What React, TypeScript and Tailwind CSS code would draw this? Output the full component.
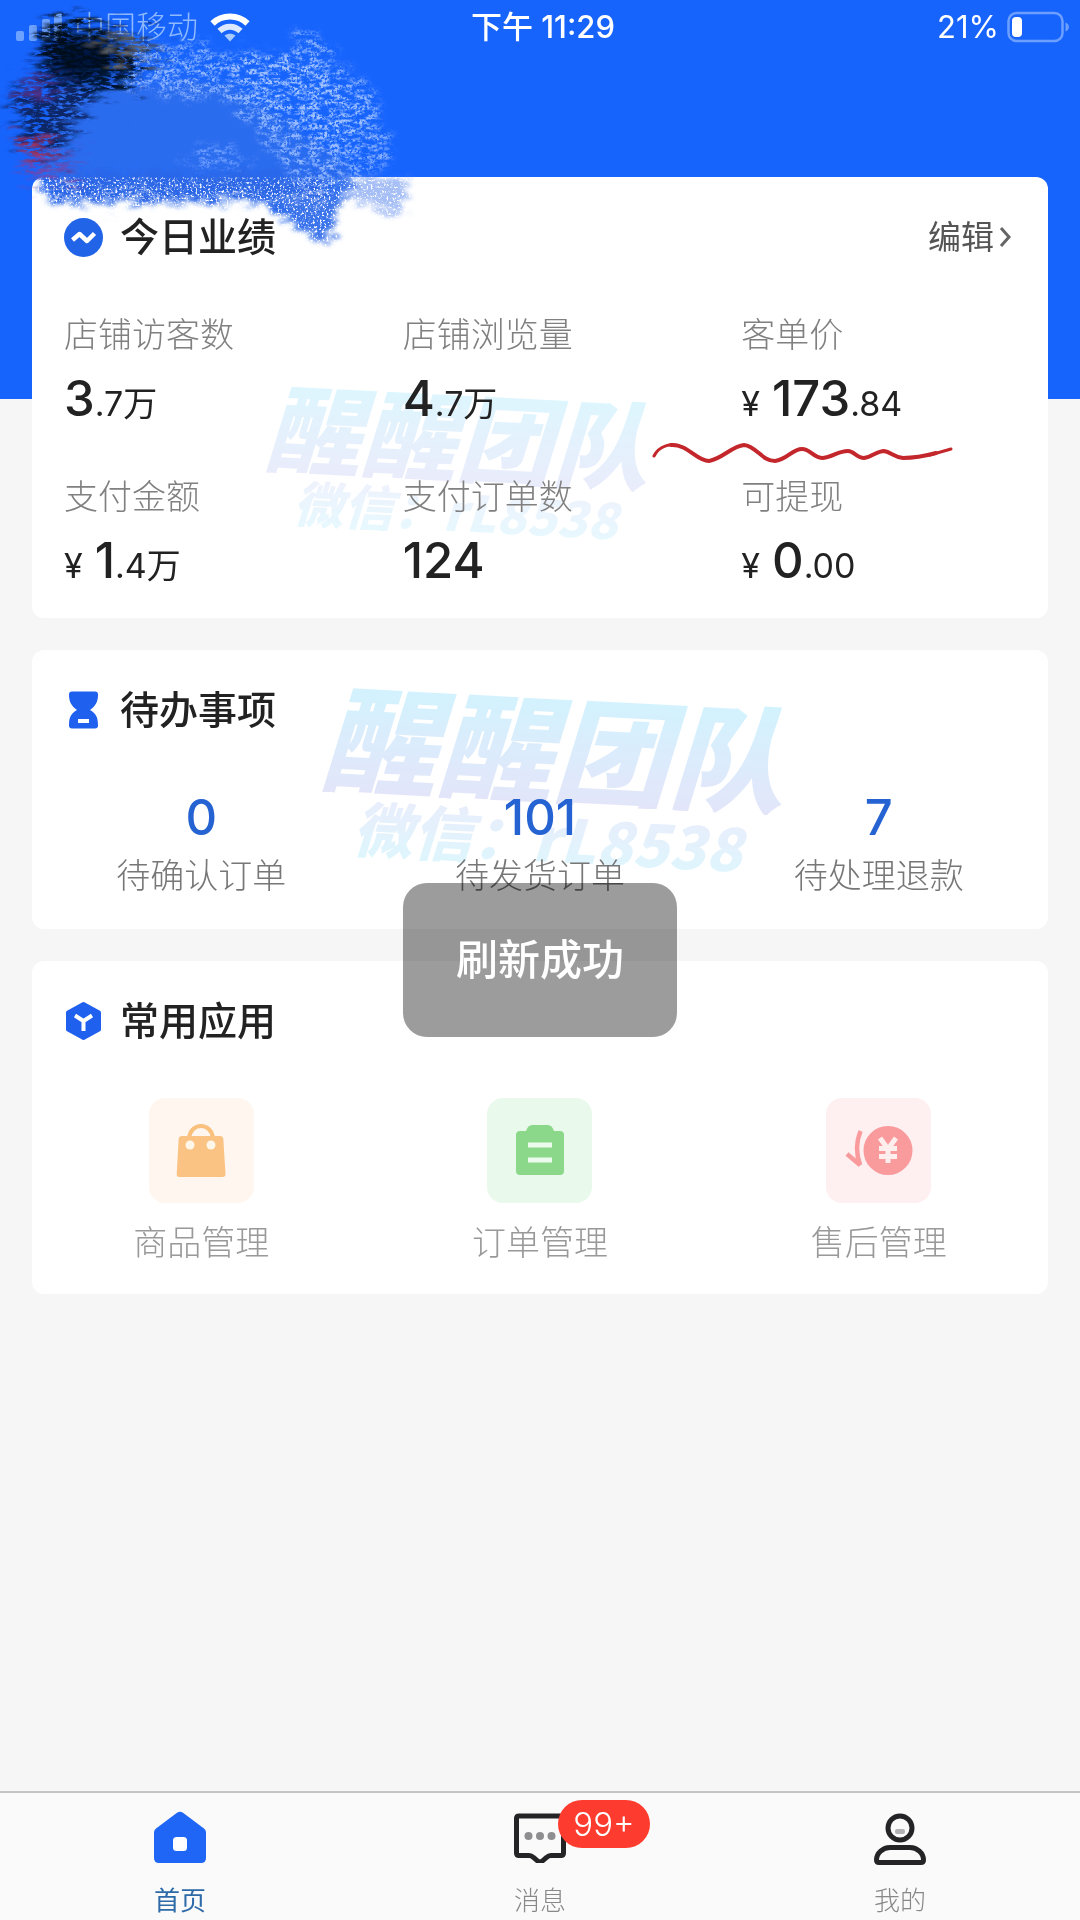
import React from 'react';

const FONT = "font-[Inter,'Noto_Sans_CJK_SC',sans-serif]";

type Metric = { label: string; yen?: boolean; big: string; small?: string };

const metrics: Metric[] = [
  { label: '店铺访客数', big: '3', small: '.7万' },
  { label: '店铺浏览量', big: '4', small: '.7万' },
  { label: '客单价', yen: true, big: '173', small: '.84' },
  { label: '支付金额', yen: true, big: '1', small: '.4万' },
  { label: '支付订单数', big: '124' },
  { label: '可提现', yen: true, big: '0', small: '.00' },
];

const todos = [
  { count: '0', label: '待确认订单' },
  { count: '101', label: '待发货订单' },
  { count: '7', label: '待处理退款' },
];

function SignalIcon() {
  return (
    <svg width="46" height="28" viewBox="0 0 46 28" fill="#6da3ff" aria-hidden="true">
      <rect x="0" y="18" width="8" height="10" rx="2" />
      <rect x="13" y="12" width="8" height="16" rx="2" />
      <rect x="26" y="6" width="8" height="22" rx="2" />
      <rect x="38" y="0" width="8" height="28" rx="2" />
    </svg>
  );
}

function WifiIcon() {
  return (
    <svg width="40" height="29" viewBox="0 0 40 29" fill="none" stroke="#fff" strokeWidth="6" aria-hidden="true">
      <path d="M2.5 10.500 C12 1.300 28 1.300 37.500 10.500" />
      <path d="M9.500 18 C15.500 12.200 24.500 12.200 30.500 18" strokeOpacity=".85" />
      <path d="M14.500 22.500 C18 20 22 20 25.500 22.500 L20 28.500Z" fill="#a9caff" stroke="none" />
    </svg>
  );
}

function BatteryIcon() {
  return (
    <svg width="63" height="32" viewBox="0 0 63 32" fill="none" aria-hidden="true">
      <rect x="1.500" y="2" width="54" height="28" rx="8" stroke="#6d9fff" strokeWidth="2.500" />
      <rect x="5" y="6" width="10" height="20" rx="4" fill="#fff" />
      <path d="M58.500 11.500 C63 13 63 19 58.500 20.500Z" fill="#6d9fff" />
    </svg>
  );
}

function TrendIcon() {
  return (
    <svg width="40" height="40" viewBox="0 0 40 40" fill="none" aria-hidden="true">
      <circle cx="19.500" cy="20.500" r="19.500" fill="#2264e8" />
      <path d="M8.500 23 L15.500 17 L23 24 L30.500 16.500" stroke="#fff" strokeWidth="4.500" strokeLinejoin="round" />
    </svg>
  );
}

function HourglassIcon() {
  return (
    <svg width="40" height="40" viewBox="0 0 40 40" aria-hidden="true">
      <path
        d="M8 1.500 H31 Q34 1.500 34 4.500 C34 12 31.500 16 26 20 C32 23.500 34 27 34 35.500 Q34 38.500 31 38.500 H8 Q5 38.500 5 35.500 C5 27 7 23.500 13 20 C7.500 16 5 12 5 4.500 Q5 1.500 8 1.500Z"
        fill="#2060ee"
      />
      <rect x="14" y="29" width="11" height="4" fill="#fff" />
    </svg>
  );
}

function CubeIcon() {
  return (
    <svg width="40" height="40" viewBox="0 0 40 40" fill="none" aria-hidden="true">
      <path
        d="M19.500 3 L35 11.500 V28.500 L19.500 37 L4 28.500 V11.500Z"
        fill="#2060ee"
        stroke="#2060ee"
        strokeWidth="4"
        strokeLinejoin="round"
      />
      <path d="M11 14.500 L19.500 20 L28 14.500 M19.500 19 V30" stroke="#fff" strokeWidth="4" />
    </svg>
  );
}

function BagIcon() {
  return (
    <svg width="56" height="56" viewBox="0 0 56 56" fill="none" aria-hidden="true">
      <path d="M16 15 C18 -1 38 -1 40 15" stroke="#fac07c" strokeWidth="4" />
      <path d="M8.500 13 H47.500 Q50 13 50.300 15.500 L52.500 51 Q52.500 54 49.500 54 H6.500 Q3.500 54 3.700 51 L5.700 15.500 Q6 13 8.500 13Z" fill="#fac384" />
      <circle cx="17" cy="22" r="4.500" fill="#fff6ea" />
      <circle cx="38" cy="22" r="4.500" fill="#fff6ea" />
    </svg>
  );
}

function ClipboardIcon() {
  return (
    <svg width="56" height="56" viewBox="0 0 56 56" fill="none" aria-hidden="true">
      <path
        d="M8 8 H14 Q16 2 20 2 H36 Q40 2 42 8 H48 Q52 8 52 12 V48 Q52 52 48 52 H8 Q4 52 4 48 V12 Q4 8 8 8Z"
        fill="#8bd88a"
      />
      <path d="M16 22 H40 M16 37 H40" stroke="#edfbed" strokeWidth="5" />
    </svg>
  );
}

function RefundIcon() {
  return (
    <svg width="72" height="56" viewBox="0 0 72 56" fill="none" aria-hidden="true">
      <circle cx="45" cy="27.500" r="24.500" fill="#f99a9c" />
      <path d="M37 15 L45 26 L53 15 M45 25 V40 M36 25.500 H54 M36 33.500 H54" stroke="#ffeeee" strokeWidth="5" />
      <path d="M17.500 8 C13 19 12.500 29 17 42 L4 31" stroke="#f99a9c" strokeWidth="4.500" strokeLinejoin="bevel" />
    </svg>
  );
}

const apps = [
  { label: '商品管理', tile: 'bg-[#fef6ef]', icon: <BagIcon /> },
  { label: '订单管理', tile: 'bg-[#e9f9ec]', icon: <ClipboardIcon /> },
  { label: '售后管理', tile: 'bg-[#feeff0]', icon: <RefundIcon /> },
];

function HomeIcon() {
  return (
    <svg width="52" height="52" viewBox="0 0 52 52" aria-hidden="true">
      <path
        d="M23 1.800 Q26 -.5 29 1.800 L50 17.500 Q52 19 52 21.500 V47 Q52 52 47 52 H5 Q0 52 0 47 V21.500 Q0 19 2 17.500Z"
        fill="#1f66f6"
      />
      <rect x="19" y="26" width="14" height="14" rx="3.500" fill="#fff" />
    </svg>
  );
}

function MessageIcon() {
  return (
    <svg width="52" height="52" viewBox="0 0 52 52" fill="none" aria-hidden="true">
      <path
        d="M5 5 H47 Q49.500 5 49.500 7.500 V42 Q49.500 44.500 47 44.500 H37 Q34.500 44.500 32.500 46.500 L28 50.300 Q26 51.500 24 50.300 L19.500 46.500 Q17.500 44.500 15 44.500 H5 Q2.500 44.500 2.500 42 V7.500 Q2.500 5 5 5Z"
        stroke="#242427"
        strokeWidth="5"
      />
      <g fill="#8e8e90">
        <circle cx="14.500" cy="25" r="4" />
        <circle cx="26" cy="25" r="4" />
        <circle cx="37.500" cy="25" r="4" />
      </g>
    </svg>
  );
}

function UserIcon() {
  return (
    <svg width="52" height="54" viewBox="0 0 52 54" fill="none" aria-hidden="true">
      <circle cx="26" cy="17" r="12" stroke="#242427" strokeWidth="5" />
      <rect x="21" y="18" width="10" height="5" rx="2" fill="#b2b2b5" />
      <path
        d="M16 36.500 H36 C43 36.500 49.500 42 49.500 49 Q49.500 51.500 47 51.500 H5 Q2.500 51.500 2.500 49 C2.500 42 9 36.500 16 36.500Z"
        stroke="#242427"
        strokeWidth="5"
      />
    </svg>
  );
}

/* Crayon strokes that hide the shop name */
function Scribble() {
  return (
    <svg
      className="pointer-events-none absolute left-0 top-0 z-10"
      width="420"
      height="260"
      viewBox="0 0 420 260"
      aria-hidden="true"
    >
      <defs>
        <filter id="rough" x="-10%" y="-15%" width="120%" height="130%">
          <feTurbulence type="fractalNoise" baseFrequency=".06 .2" numOctaves="4" seed="4" result="n" />
          <feDisplacementMap in="SourceGraphic" in2="n" scale="30" xChannelSelector="R" yChannelSelector="G" result="d" />
          <feGaussianBlur in="d" stdDeviation="2" result="b" />
          <feTurbulence type="fractalNoise" baseFrequency=".45" numOctaves="3" seed="9" />
          <feColorMatrix values="0 0 0 0 0  0 0 0 0 0  0 0 0 0 0  0 0 0 5 -1.300" result="g" />
          <feComposite in="b" in2="g" operator="in" />
        </filter>
        <filter id="chalk" x="-10%" y="-15%" width="120%" height="130%">
          <feTurbulence type="fractalNoise" baseFrequency=".05 .09" numOctaves="4" seed="2" result="n" />
          <feDisplacementMap in="SourceGraphic" in2="n" scale="40" xChannelSelector="R" yChannelSelector="G" result="d" />
          <feGaussianBlur in="d" stdDeviation="3" result="b" />
          <feTurbulence type="fractalNoise" baseFrequency=".1 .2" numOctaves="5" seed="21" />
          <feColorMatrix values="0 0 0 0 0  0 0 0 0 0  0 0 0 0 0  0 0 0 4 -1.500" result="g" />
          <feComposite in="b" in2="g" operator="in" result="c" />
          <feTurbulence type="fractalNoise" baseFrequency=".4" numOctaves="3" seed="7" />
          <feColorMatrix values="0 0 0 0 0  0 0 0 0 0  0 0 0 0 0  0 0 0 4 -1.300" result="f" />
          <feComposite in="c" in2="f" operator="in" />
        </filter>
        <filter id="streak" x="-20%" y="-20%" width="140%" height="140%">
          <feTurbulence type="fractalNoise" baseFrequency=".03 .3" numOctaves="4" seed="12" result="n" />
          <feDisplacementMap in="SourceGraphic" in2="n" scale="70" xChannelSelector="R" yChannelSelector="B" result="d" />
          <feGaussianBlur in="d" stdDeviation="3 1" result="b" />
          <feTurbulence type="fractalNoise" baseFrequency=".12 .35" numOctaves="4" seed="5" />
          <feColorMatrix values="0 0 0 0 0  0 0 0 0 0  0 0 0 0 0  0 0 0 5 -1.600" result="g" />
          <feComposite in="b" in2="g" operator="in" />
        </filter>
        <filter id="soft" x="-20%" y="-20%" width="140%" height="140%">
          <feGaussianBlur stdDeviation="8" />
        </filter>
      </defs>
      <path d="M62 82 L200 82 L310 160 L300 176 L70 172 L56 130Z" fill="#2b6cf2" filter="url(#soft)" />
      <g filter="url(#rough)">
        <path d="M58 88 L230 84 L345 160 L355 188 L334 206 L330 244 L306 236 L264 202 L160 204 L48 202 L36 178Z" fill="#2c6cee" />
        <path d="M52 172 L330 172 L328 214 L290 212 L262 200 L160 203 L52 200Z" fill="#2a66e6" />
        <path d="M274 196 L340 196 L330 244 L312 238Z" fill="#3a73ea" />
        <path d="M345 176 L408 180 L402 214 L388 216 L345 195Z" fill="#5d88ee" fillOpacity=".55" />
      </g>
      <g filter="url(#chalk)">
        <path d="M110 42 L200 44 L242 62 L290 52 L300 26 L316 34 L334 58 L364 84 L380 110 L388 166 L350 180 L310 190 L228 98 L130 92Z" fill="#8db4ff" />
        <path d="M230 50 L290 52 L360 96 L372 140 L330 150 L250 96Z" fill="#a8c6ff" fillOpacity=".8" />
        <path d="M224 98 L306 192 L318 180 L246 98Z" fill="#8db4ff" />
        <path d="M180 160 L205 140 L255 160 L240 174Z" fill="#6c9cff" />
        <path d="M44 186 L50 204 L330 204 L330 192 L200 190Z" fill="#e4ebfb" fillOpacity=".6" />
      </g>
      <path d="M48 36 L120 38 L110 76 L56 84Z" fill="#06163f" filter="url(#soft)" />
      <g filter="url(#streak)">
        <path d="M42 28 L72 24 L160 40 L140 62 L132 86 L62 96 L40 80Z" fill="#041236" />
        <path d="M20 72 L90 82 L84 112 L56 160 L24 160 L14 118Z" fill="#102766" />
        <path d="M40 26 L70 20 L150 40 L130 70 L60 78Z" fill="#020a1e" />
        <path d="M100 40 L156 44 L152 54 L104 50Z" fill="#8f9299" fillOpacity=".8" />
        <path d="M22 76 L50 78 L48 104 L24 100Z" fill="#5a3593" fillOpacity=".8" />
        <path d="M24 142 L48 144 L46 160 L22 158Z" fill="#a13562" />
        <path d="M22 166 L90 160 L70 172 L20 178Z" fill="#8a3c96" fillOpacity=".8" />
      </g>
    </svg>
  );
}

function Squiggle() {
  return (
    <svg
      className="pointer-events-none absolute left-[620px] top-[262px]"
      width="302"
      height="28"
      viewBox="652 439 302 28"
      fill="none"
      stroke="#c3272c"
      strokeLinecap="round"
      strokeLinejoin="round"
      aria-hidden="true"
    >
      <path d="M654 456 C659 446 671 442 682 447" strokeWidth="3" />
      <path d="M671 445 C688 444 696 461 709 461 C722 459 732 446 744 445 C756 446 762 461 775 461 C787 460 792 449 802 449 C811 449 813 458 823 458 C833 457 838 451 848 451 C854 451 857 458 864 458 C872 457 877 451 884 451 C891 452 894 457 903 458 C914 458 925 456 936 453" strokeWidth="4" />
      <path d="M930 455 L951 449" strokeWidth="3" />
    </svg>
  );
}

type WatermarkProps = { place: string; title: string; note: string };

function Watermark({ place, title, note }: WatermarkProps) {
  return (
    <div
      aria-hidden="true"
      className={`pointer-events-none absolute rotate-3 whitespace-nowrap font-['Noto_Sans_CJK_SC',sans-serif] font-black italic mix-blend-multiply ${place}`}
    >
      <div className={`bg-linear-to-b from-[#c4f2ff] to-[#dcdff8] bg-clip-text text-transparent ${title}`}>醒醒团队</div>
      <div className={`bg-linear-to-b from-[#e4e8fb] to-[#d6f4fd] bg-clip-text text-transparent ${note}`}>微信：rL8538</div>
    </div>
  );
}

function SectionTitle({ icon, children }: { icon: React.ReactNode; children: string }) {
  return (
    <div className="flex h-10 items-center gap-4">
      {icon}
      <h2 className="text-[39px] leading-10 font-medium text-[#222]">{children}</h2>
    </div>
  );
}

const cardClass = 'relative rounded-xl bg-white pt-10';
const labelClass = 'text-[34px] leading-10 font-light';
const tabClass = 'flex flex-col items-center justify-between text-[26px] leading-7';

export default function App() {
  return (
    <div className={`relative flex min-h-screen flex-col bg-[#f6f6f6] ${FONT}`}>
      <header className="h-[399px] bg-[#1764fd] text-white">
        <div className="grid h-[54px] grid-cols-3 items-center pr-[10px] pl-4 text-[31px] leading-9">
          <div className="flex items-center gap-3">
            <SignalIcon />
            <span className="font-light text-[#8fbaff]">中国移动</span>
            <WifiIcon />
          </div>
          <div className="text-center font-medium">下午 11:29</div>
          <div className="flex items-center justify-end gap-2">
            <span>21%</span>
            <BatteryIcon />
          </div>
        </div>
      </header>
      <Scribble />

      <main className="-mt-[222px] flex flex-1 flex-col gap-8 px-8">
        <section className={cardClass}>
          <div className="flex items-center justify-between pr-9 pl-8">
            <SectionTitle icon={<TrendIcon />}>今日业绩</SectionTitle>
            <button type="button" className="flex items-center gap-1 text-[33px] leading-10 text-[#555]">
              编辑
              <svg width="14" height="24" viewBox="0 0 14 24" fill="none" stroke="#666" strokeWidth="3" aria-hidden="true">
                <path d="M3 3 L11 12 L3 21" />
              </svg>
            </button>
          </div>
          <Watermark place="top-[206px] left-[232px] opacity-60" title="text-[96px] leading-[100px]" note="pl-8 text-[50px] leading-[52px]" />
          <dl className="relative mt-[58px] grid grid-cols-3 gap-y-[50px] pb-[29px]">
            {metrics.map((m) => (
              <div key={m.label} className="pl-8">
                <dt className={`${labelClass} text-[#808080]`}>{m.label}</dt>
                <dd className="mt-4 h-14 text-[34px] leading-14 whitespace-nowrap text-[#222]">
                  {m.yen && <span className="mr-3">¥</span>}
                  <span className="text-[49px] font-medium">{m.big}</span>
                  {m.small}
                </dd>
              </div>
            ))}
          </dl>
          <Squiggle />
        </section>

        <section className={`${cardClass} pb-[33px]`}>
          <div className="px-8">
            <SectionTitle icon={<HourglassIcon />}>待办事项</SectionTitle>
          </div>
          <Watermark place="top-[32px] left-[288px] opacity-80" title="text-[116px] leading-[122px]" note="pl-9 text-[60px] leading-[64px]" />
          <ul className="relative mt-[60px] grid grid-cols-3 text-center">
            {todos.map((t) => (
              <li key={t.label}>
                <a href="#todo" className="block">
                  <span className="block text-[49px] leading-14 font-medium text-[#2563d2]">{t.count}</span>
                  <span className={`mt-[10px] block text-[#777] ${labelClass}`}>{t.label}</span>
                </a>
              </li>
            ))}
          </ul>
        </section>

        <section className={`${cardClass} pb-[31px]`}>
          <div className="px-8">
            <SectionTitle icon={<CubeIcon />}>常用应用</SectionTitle>
          </div>
          <ul className="mt-[57px] grid grid-cols-3">
            {apps.map((a) => (
              <li key={a.label}>
                <a href="#app" className="flex flex-col items-center gap-5">
                  <span className={`flex size-[105px] items-center justify-center rounded-2xl ${a.tile}`}>{a.icon}</span>
                  <span className={`${labelClass} text-[#999]`}>{a.label}</span>
                </a>
              </li>
            ))}
          </ul>
        </section>
      </main>

      <nav className="grid h-[129px] grid-cols-3 border-t-2 border-[#c4c4c6] bg-[#fafafb] pt-[18px] pb-[5px]">
        <a href="#home" className={`${tabClass} text-[#2e6aa8]`}>
          <HomeIcon />
          首页
        </a>
        <a href="#messages" className={`${tabClass} font-light text-[#888]`}>
          <span className="relative">
            <MessageIcon />
            <span className="absolute -top-[11px] left-11 flex h-12 w-[92px] items-center justify-center rounded-full bg-[#fe3b2f] text-[33px] font-light text-white">
              99+
            </span>
          </span>
          消息
        </a>
        <a href="#me" className={`${tabClass} font-light text-[#888]`}>
          <UserIcon />
          我的
        </a>
      </nav>

      <div
        role="status"
        className="fixed top-1/2 left-1/2 z-20 -translate-x-1/2 -translate-y-1/2 rounded-3xl bg-black/39 px-[53px] py-[53px] text-[42px] leading-12 font-medium whitespace-nowrap text-white"
      >
        刷新成功
      </div>
    </div>
  );
}
